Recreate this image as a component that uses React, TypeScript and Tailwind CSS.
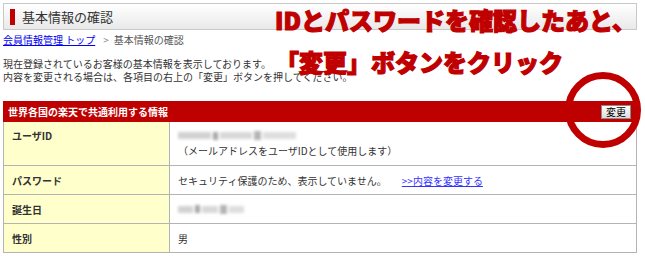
import React from 'react';

const rows = [
  { label: 'パスワード', kind: 'password' },
  { label: '誕生日', kind: 'birthday' },
  { label: '性別', kind: 'gender' },
];

function Blurred({ width }: { width: number }) {
  // masked personal data, drawn as a soft smudge
  return (
    <div className="flex items-center gap-[2px] blur-[1.6px]" style={{ width }}>
      <div className="h-[7px] flex-1 bg-[#d2d2d2]"></div>
      <div className="h-[8px] w-[5px] bg-[#a6a6a6]"></div>
      <div className="h-[7px] flex-1 bg-[#d8d8d8]"></div>
      <div className="h-[9px] w-[7px] bg-[#b4b4b4]"></div>
      <div className="h-[7px] flex-1 bg-[#dedede]"></div>
    </div>
  );
}

export default function App() {
  return (
    <div className="relative w-[645px] h-[256px] overflow-hidden bg-white text-[#333] font-['Noto_Sans_CJK_JP','Noto_Sans',sans-serif]">
      {/* Page title bar */}
      <div className="ml-[3px] mt-[3px] flex h-[27px] w-[634px] items-center border border-[#c8c8c8] bg-gradient-to-b from-white to-[#e9e9e9]">
        <div className="ml-[6px] h-[16px] w-[5px] bg-[#c00000]"></div>
        <span className="ml-[7px] text-[13px] leading-none text-[#333]">基本情報の確認</span>
      </div>

      {/* Breadcrumb */}
      <div className="ml-[3px] mt-[4px] flex text-[10px] leading-[12px] text-[#555]">
        <a href="#" className="text-[#0000ee] underline">会員情報管理 トップ</a>
        <span className="ml-[8px] text-[#888]">&gt;</span>
        <span className="ml-[5px]">基本情報の確認</span>
      </div>

      {/* Intro */}
      <div className="ml-[3px] mt-[11px] text-[10px] leading-[13px] text-[#333]">
        <p>現在登録されているお客様の基本情報を表示しております。</p>
        <p>内容を変更される場合は、各項目の右上の「変更」ボタンを押してください。</p>
      </div>

      {/* Info table */}
      <div className="ml-[3px] mt-[18px] w-[634px]">
        <div className="flex h-[21px] items-center justify-between bg-[#bf0000] pl-[5px] pr-[6px]">
          <span className="text-[10px] font-bold text-white">世界各国の楽天で共通利用する情報</span>
          <button className="flex h-[14px] w-[30px] items-center justify-center border border-[#8a8a8a] bg-gradient-to-b from-white to-[#dcdcdc] text-[10px] leading-none text-black">
            変更
          </button>
        </div>
        <div className="border-x border-[#b4b4b4] text-[10px]">
          <div className="flex h-[44px] border-b border-[#b4b4b4]">
            <div className="w-[166px] border-r border-[#b4b4b4] bg-[#ffffcc] pl-[8px] pt-[8px] font-bold leading-[12px]">ユーザID</div>
            <div className="flex-1 pl-[8px] pt-[6px] leading-[15px]">
              <div className="flex h-[15px] items-center">
                <Blurred width={118} />
              </div>
              <div>（メールアドレスをユーザIDとして使用します）</div>
            </div>
          </div>
          {rows.map((row) => (
            <div key={row.label} className="flex h-[29px] border-b border-[#b4b4b4]">
              <div className="flex w-[166px] items-center border-r border-[#b4b4b4] bg-[#ffffcc] pl-[8px] font-bold">
                {row.label}
              </div>
              <div className="flex flex-1 items-center pl-[8px]">
                {row.kind === 'password' && (
                  <>
                    <span>セキュリティ保護のため、表示していません。</span>
                    <a href="#" className="ml-[15px] text-[#3333ff] underline">&gt;&gt;内容を変更する</a>
                  </>
                )}
                {row.kind === 'birthday' && <Blurred width={66} />}
                {row.kind === 'gender' && <span>男</span>}
              </div>
            </div>
          ))}
        </div>
      </div>

      {/* Annotation overlay */}
      <div className="pointer-events-none absolute left-[275px] top-[-1px] text-[24px] font-black leading-[42px] text-[#c00000] [-webkit-text-stroke:1.2px_#c00000]">
        <p>IDとパスワードを確認したあと、</p>
        <p>「変更」ボタンをクリック</p>
      </div>
      <svg className="pointer-events-none absolute left-[560px] top-[66px]" width="86" height="90" viewBox="0 0 86 90">
        <circle cx="43" cy="44" r="34.5" fill="none" stroke="#c00000" strokeWidth="7" />
      </svg>
    </div>
  );
}
